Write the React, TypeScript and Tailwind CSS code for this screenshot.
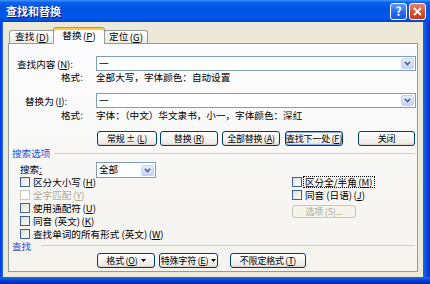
import React from "react";

function M({ c }: { c: string }) {
  return (
    <span className="ml-[1.5px] inline-block leading-[10px] whitespace-nowrap">
      (<span className="underline underline-offset-[1px]">{c}</span>)
    </span>
  );
}

function Arrow() {
  return (
    <div className="ml-auto mr-[1px] h-[11px] w-[13px] rounded-[2px] border border-[#c3d3fd] bg-[linear-gradient(180deg,#e6eefc,#c3d4fb)] flex items-center justify-center">
      <svg width="7" height="5" viewBox="0 0 7 5">
        <path d="M0.8 0.8 L3.5 3.5 L6.2 0.8" fill="none" stroke="#4d6185" strokeWidth="1.6" />
      </svg>
    </div>
  );
}

function Combo({ className, text }: { className: string; text: string }) {
  return (
    <div className={"flex items-center border border-[#7f9db9] bg-white " + className}>
      <span className="pl-[2px] leading-none">{text}</span>
      <Arrow />
    </div>
  );
}

function Btn({
  className,
  children,
  def,
  disabled,
}: {
  className: string;
  children: React.ReactNode;
  def?: boolean;
  disabled?: boolean;
}) {
  const base =
    "h-[15px] flex items-center justify-center rounded-[3px] border leading-none whitespace-nowrap text-[9px] tracking-[-0.2px] ";
  const look = disabled
    ? "border-[#c9c7ba] bg-[#f5f4ea] text-[#aca899] "
    : def
    ? "border-[#003c74] bg-[linear-gradient(180deg,#ffffff,#ecebe6_86%,#d6d0c5)] shadow-[inset_0_0_0_1px_#8fb0ea] "
    : "border-[#003c74] bg-[linear-gradient(180deg,#ffffff,#ecebe6_86%,#d6d0c5)] ";
  return <div className={base + look + className}>{children}</div>;
}

function Check({
  children,
  disabled,
  focus,
}: {
  children: React.ReactNode;
  disabled?: boolean;
  focus?: boolean;
}) {
  return (
    <div className="h-[13px] flex items-center">
      <div
        className={
          disabled
            ? "w-[10px] h-[10px] border border-[#cac8bb] bg-white"
            : "w-[10px] h-[10px] border border-[#3e628f] bg-[linear-gradient(135deg,#dcdcd7,#ffffff)]"
        }
      />
      <div
        className={
          "ml-[2px] px-[1px] leading-[10px] whitespace-nowrap " +
          (disabled ? "text-[#aca899] " : "") +
          (focus ? "outline outline-1 outline-dotted outline-black" : "")
        }
      >
        {children}
      </div>
    </div>
  );
}

function Tri() {
  return (
    <svg width="5" height="3" viewBox="0 0 5 3" className="ml-[3px]">
      <path d="M0 0 H5 L2.5 3 Z" fill="#000" />
    </svg>
  );
}

export default function App() {
  return (
    <div className="w-[430px] h-[284px] flex flex-col bg-[#0831d9] text-[9.6px] text-black font-['Noto_Sans_CJK_SC','Noto_Sans',sans-serif] overflow-hidden">
      {/* title bar */}
      <div className="h-[22px] flex items-center bg-[linear-gradient(180deg,#3d95ff_0%,#0a5eeb_12%,#0054e3_45%,#0058ee_80%,#0050d8_92%,#0041c4_100%)]">
        <div className="pl-[6px] text-white font-bold text-[11px] leading-none [text-shadow:1px_1px_0_#0f1089]">
          查找和替换
        </div>
        <div className="ml-auto flex items-center gap-[2px] pr-[4px]">
          <div className="w-[17px] h-[17px] rounded-[3px] border border-white bg-[linear-gradient(180deg,#5a9bfc,#2766ee_60%,#1c55e0)] flex items-center justify-center text-white font-bold text-[12px] leading-none">
            ?
          </div>
          <div className="w-[17px] h-[17px] rounded-[3px] border border-white bg-[linear-gradient(180deg,#e8826a,#d34f2d_60%,#c23a17)] flex items-center justify-center">
            <svg width="9" height="9" viewBox="0 0 9 9">
              <path d="M1 1 L8 8 M8 1 L1 8" stroke="#fff" strokeWidth="1.8" />
            </svg>
          </div>
        </div>
      </div>
      {/* body */}
      <div className="flex-1 flex">
        <div className="w-[3px] bg-[linear-gradient(90deg,#0831d9,#166aee)]" />
        <div className="flex-1 bg-[#ece9d8] pl-[5px] pr-[5px] pb-[5px] flex flex-col">
          {/* tabs */}
          <div className="h-[21px] flex items-end pl-[1px]">
            <div className="w-[46px] h-[13px] rounded-t-[3px] border border-b-0 border-[#919b9c] bg-[linear-gradient(180deg,#ffffff,#ecebe5)] flex items-center justify-center leading-none whitespace-nowrap">
              查找<M c="D" />
            </div>
            <div className="relative z-10 -ml-[2px] -mb-px w-[52px] h-[17px] rounded-t-[3px] border border-b-0 border-[#919b9c] border-t-[#e68b2c] bg-[#fcfcfe] shadow-[inset_0_2px_0_#ffc83c] flex items-center justify-center leading-none whitespace-nowrap">
              替换<M c="P" />
            </div>
            <div className="-ml-[1px] w-[44px] h-[13px] rounded-t-[3px] border border-b-0 border-[#919b9c] bg-[linear-gradient(180deg,#ffffff,#ecebe5)] flex items-center justify-center leading-none whitespace-nowrap">
              定位<M c="G" />
            </div>
          </div>
          {/* panel */}
          <div className="flex-1 border border-[#919b9c] bg-[linear-gradient(180deg,#fcfcfe,#f4f3ee)] flex flex-col">
            <div className="mt-[12px] h-[15px] flex items-center">
              <div className="w-[87px] pl-[8px] leading-[10px] whitespace-nowrap">
                查找内容<M c="N" />:
              </div>
              <Combo className="w-[320px] h-[15px]" text="一" />
            </div>
            <div className="h-[11px] flex items-center">
              <div className="w-[87px] pl-[52px] leading-[10px]">格式:</div>
              <div className="leading-[10px] whitespace-nowrap">全部大写，字体颜色：自动设置</div>
            </div>
            <div className="mt-[11px] h-[15px] flex items-center">
              <div className="w-[87px] pl-[16px] leading-[10px] whitespace-nowrap">
                替换为<M c="I" />:
              </div>
              <Combo className="w-[320px] h-[15px]" text="一" />
            </div>
            <div className="h-[14px] flex items-center">
              <div className="w-[87px] pl-[52px] leading-[10px]">格式:</div>
              <div className="leading-[10px] whitespace-nowrap">
                字体：（中文）华文隶书，小一，字体颜色：深红
              </div>
            </div>
            <div className="mt-[9px] h-[15px] flex pl-[88px]">
              <Btn className="w-[60px]">
                常规 ±<M c="L" />
              </Btn>
              <Btn className="ml-[3px] w-[58px]">
                替换<M c="R" />
              </Btn>
              <Btn className="ml-[4px] w-[58px]">
                全部替换<M c="A" />
              </Btn>
              <Btn className="ml-[5px] w-[58px]" def>
                查找下一处<M c="F" />
              </Btn>
              <Btn className="ml-[15px] w-[57px]">关闭</Btn>
            </div>
            <div className="h-[14px] flex items-center pl-[3px]">
              <span className="text-[#1b4fd0] leading-[10px]">搜索选项</span>
              <div className="ml-[4px] mr-[2px] flex-1 h-px bg-[#d0d0bf]" />
            </div>
            <div className="mt-[2px] h-[16px] flex items-center">
              <div className="w-[87px] pl-[11px] pb-[2px] leading-[10px]">
                搜索<span className="inline-block leading-[10px] underline underline-offset-[1px]">:</span>
              </div>
              <Combo className="w-[60px] h-[16px]" text="全部" />
            </div>
            <div className="-mt-[3px] flex">
              <div className="w-[283px] pl-[11px] flex flex-col">
                <Check>
                  区分大小写<M c="H" />
                </Check>
                <Check disabled>
                  全字匹配<M c="Y" />
                </Check>
                <Check>
                  使用通配符<M c="U" />
                </Check>
                <Check>
                  同音 (英文)<M c="K" />
                </Check>
                <Check>
                  查找单词的所有形式 (英文)<M c="W" />
                </Check>
              </div>
              <div className="flex flex-col">
                <Check focus>
                  区分全/半角<M c="M" />
                </Check>
                <Check>
                  同音 (日语)<M c="J" />
                </Check>
                <Btn className="mt-[4px] !h-[13px] w-[64px]" disabled>
                  选项 (S)...
                </Btn>
              </div>
            </div>
            <div className="h-[11px] flex items-center pl-[3px]">
              <span className="text-[#1b4fd0] leading-[10px]">查找</span>
              <div className="ml-[10px] mr-[2px] flex-1 h-px bg-[#d0d0bf]" />
            </div>
            <div className="mt-[2px] h-[15px] flex pl-[88px]">
              <Btn className="w-[58px]">
                格式<M c="O" />
                <Tri />
              </Btn>
              <Btn className="ml-[4px] w-[59px]">
                特殊字符<M c="E" />
                <Tri />
              </Btn>
              <Btn className="ml-[12px] w-[76px]">
                不限定格式<M c="T" />
              </Btn>
            </div>
          </div>
        </div>
        <div className="w-[7px] bg-[linear-gradient(90deg,#166aee,#0c44d8_60%,#0831d9)]" />
      </div>
      <div className="h-[7px] bg-[linear-gradient(180deg,#166aee,#0a3fd6_50%,#0029a8)]" />
    </div>
  );
}
